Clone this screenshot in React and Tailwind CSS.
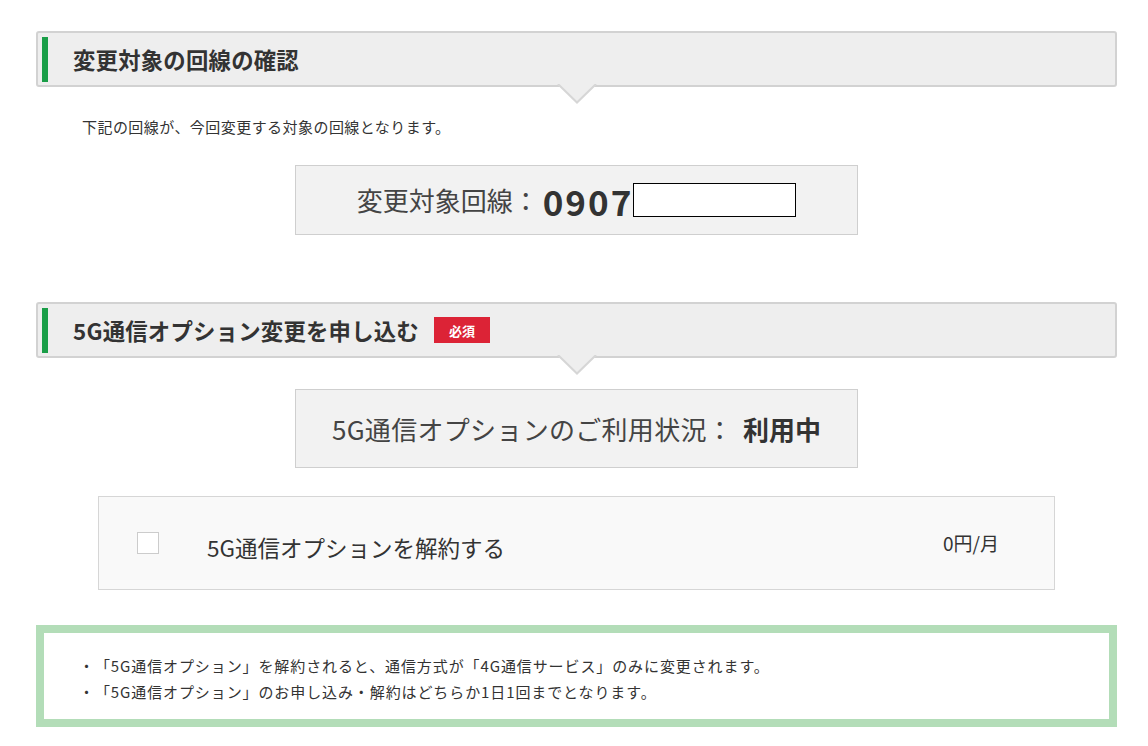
import React from "react";

const SectionHeader = ({ title, required }) => (
  <div className="relative h-[56px] border-2 border-[#d2d2d2] rounded-[3px] bg-[#eeeeee] flex items-center">
    <div className="ml-[4px] w-[6px] h-[45px] bg-[#1a9e48]" />
    <h2 className="ml-[25px] text-[22.4px] font-bold leading-none text-[#333] tracking-[0.2px]">{title}</h2>
    {required && (
      <span className="ml-[15px] px-[15px] h-[26px] flex items-center bg-[#dc2336] text-white text-[13px] font-bold leading-none">
        必須
      </span>
    )}
    <svg
      className="absolute left-1/2 -translate-x-1/2 top-[calc(100%-1px)]"
      width="40"
      height="20"
      viewBox="0 0 40 20"
    >
      <polygon points="0,0 40,0 20,19" fill="#eeeeee" />
      <polyline points="1,0 20,18.5 39,0" fill="none" stroke="#d6d6d6" strokeWidth="2" />
    </svg>
  </div>
);

const App = () => {
  return (
    <div className="min-h-[746px] bg-white font-['Noto_Sans_CJK_JP',sans-serif] text-[#333] [text-spacing-trim:space-all]">
      <div className="ml-[36px] w-[1081px] pt-[31px]">
        <SectionHeader title="変更対象の回線の確認" />
        <p className="mt-[30px] pl-[46px] text-[15px] tracking-[0.45px] leading-[20px]">
          下記の回線が、今回変更する対象の回線となります。
        </p>
        <div className="mx-auto mt-[28px] w-[563px] h-[70px] border border-[#cfcfcf] bg-[#f2f2f2] flex items-center justify-center">
          <span className="text-[26px] leading-none text-[#444]">変更対象回線：</span>
          <span className="ml-[4px] text-[35px] font-bold leading-none tracking-[2px]">0907</span>
          <span className="w-[163px] h-[34px] border border-black bg-white" />
        </div>

        <div className="mt-[67px]">
          <SectionHeader title="5G通信オプション変更を申し込む" required />
        </div>
        <div className="mx-auto mt-[31px] w-[563px] h-[79px] border border-[#cfcfcf] bg-[#f2f2f2] flex items-center justify-center">
          <span className="text-[26px] leading-none text-[#444] tracking-[0.3px]">5G通信オプションのご利用状況：</span>
          <span className="ml-[10px] text-[26px] font-bold leading-none">利用中</span>
        </div>

        <div className="mx-auto mt-[28px] w-[957px] h-[94px] border border-[#d6d6d6] bg-[#f9f9f9] flex items-center pl-[38px] pr-[55px]">
          <span className="w-[22px] h-[22px] border border-[#cccccc] bg-white shrink-0" />
          <span className="ml-[48px] mt-[8px] text-[22.5px] leading-none">5G通信オプションを解約する</span>
          <span className="ml-auto mb-[2px] text-[19px] leading-none">0円/月</span>
        </div>

        <div className="mt-[35px] h-[102px] border-[8px] border-[#b3ddb8] bg-white pl-[35px] pt-[20px] text-[15px] tracking-[0.9px] leading-[26px]">
          <p>・「5G通信オプション」を解約されると、通信方式が「4G通信サービス」のみに変更されます。</p>
          <p>・「5G通信オプション」のお申し込み・解約はどちらか1日1回までとなります。</p>
        </div>
      </div>
    </div>
  );
};

export default App;
